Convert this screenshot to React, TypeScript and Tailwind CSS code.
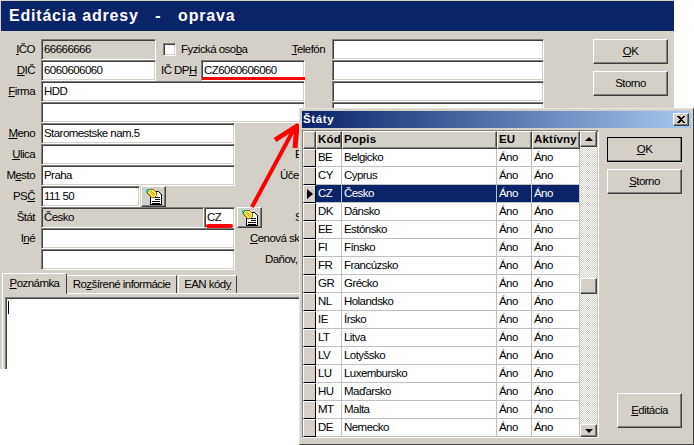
import React from "react";

const raised = "border border-t-white border-l-white border-r-[#404040] border-b-[#404040] shadow-[inset_-1px_-1px_0_#808080] bg-[#d4d0c8]";
const sunken = "border border-t-[#808080] border-l-[#808080] border-r-white border-b-white shadow-[inset_1px_1px_0_#404040,inset_-1px_-1px_0_#d4d0c8]";

function Field({ value = "", className = "", gray = false }: { value?: string; className?: string; gray?: boolean }) {
  return (
    <div className={`h-[21px] shrink-0 flex items-center pl-[2px] overflow-hidden whitespace-nowrap ${sunken} ${gray ? "bg-[#d4d0c8]" : "bg-white"} ${className}`}>
      {value}
    </div>
  );
}

function Label({ children }: { children?: React.ReactNode }) {
  return <div className="w-[35px] mr-[6px] shrink-0 text-right whitespace-nowrap flex justify-end">{children}</div>;
}

function Row({ children }: { children: React.ReactNode }) {
  return <div className="h-[21px] flex items-center whitespace-nowrap">{children}</div>;
}

function LookupIcon() {
  return (
    <svg width="20" height="18" viewBox="0 0 20 18" shapeRendering="crispEdges">
      <path d="M6.500 3.500h8l3 3v10h-11z" fill="#fff" stroke="#000" />
      <path d="M10 9h6M11 11h5M8 13h8M8 15h8" stroke="#000" />
      <path d="M2 1h4v4H2z" fill="#00d8e8" />
      <path d="M5.500 1.500h4l3 3v3l-2 2h-3l-4-4v-2z" fill="#ffec70" stroke="#807000" />
      <path d="M5 3l5 5M7 3l4 4M4 5l3 3" stroke="#c8a000" />
    </svg>
  );
}

function LookupButton() {
  return (
    <div className={`w-[25px] h-[21px] shrink-0 flex items-center justify-center ${raised}`}>
      <LookupIcon />
    </div>
  );
}

function Button({ children, className = "" }: { children: React.ReactNode; className?: string }) {
  return <div className={`flex items-center justify-center shrink-0 ${raised} ${className}`}>{children}</div>;
}

const countries: [string, string][] = [
  ["BE", "Belgicko"], ["CY", "Cyprus"], ["CZ", "Česko"], ["DK", "Dánsko"],
  ["EE", "Estónsko"], ["FI", "Fínsko"], ["FR", "Francúzsko"], ["GR", "Grécko"],
  ["NL", "Holandsko"], ["IE", "Írsko"], ["LT", "Litva"], ["LV", "Lotyšsko"],
  ["LU", "Luxembursko"], ["HU", "Maďarsko"], ["MT", "Malta"], ["DE", "Nemecko"],
];

const dither = "bg-[repeating-conic-gradient(#fff_0_25%,#d4d0c8_0_50%)] bg-[length:2px_2px]";

function HeaderCell({ children, className = "" }: { children?: React.ReactNode; className?: string }) {
  return (
    <div className={`h-[18px] shrink-0 flex items-center pl-[1px] font-bold tracking-[0.2px] whitespace-nowrap overflow-hidden ${raised} ${className}`}>
      {children}
    </div>
  );
}

function CountryRow({ code, name, selected }: { code: string; name: string; selected: boolean }) {
  const cell = "h-[18px] shrink-0 flex items-center pl-[2px] border-r border-b border-[#c0c0c0] whitespace-nowrap";
  return (
    <div className={`flex ${selected ? "bg-[#0a246a] text-white" : "bg-white text-black"}`}>
      <div className="w-[13px] h-[18px] shrink-0 flex items-center justify-center border border-t-white border-l-white border-r-black border-b-black bg-[#d4d0c8]">
        {selected && <div className="w-0 h-0 border-y-[5px] border-y-transparent border-l-[6px] border-l-black" />}
      </div>
      <div className={`w-[26px] ${cell}`}>{code}</div>
      <div className={`w-[155px] ${cell}`}>{name}</div>
      <div className={`w-[35px] ${cell}`}>Áno</div>
      <div className={`w-[48px] ${cell}`}>Áno</div>
    </div>
  );
}

function ScrollButton({ up }: { up: boolean }) {
  return (
    <div className={`w-[17px] flex items-center justify-center shrink-0 ${up ? "h-[16px]" : "h-[13px]"} ${raised}`}>
      <div className={`w-0 h-0 border-x-[4px] border-x-transparent ${up ? "border-b-[4px] border-b-black" : "border-t-[4px] border-t-black"}`} />
    </div>
  );
}

export default function App() {
  return (
    <div className="relative w-[694px] h-[445px] overflow-hidden bg-white text-black text-[11.5px] leading-none tracking-[-0.55px] font-['Liberation_Sans',Arial,sans-serif]">
      {/* Main window */}
      <div className="w-[674px] h-[369px] overflow-hidden bg-[#d4d0c8] pt-[1px] pl-[1px] flex flex-col">
        <div className="h-[30px] shrink-0 bg-[#0a246a] text-white font-bold text-[16px] flex items-center pl-[8px] tracking-[0.8px] [word-spacing:0.3px] whitespace-pre">
          Editácia adresy   -   oprava
        </div>
        <div className="flex pt-[8px] -ml-[1px]">
          <div className="w-[332px] shrink-0 flex flex-col">
            <Row>
              <Label><u>I</u>ČO</Label>
              <Field value="66666666" gray className="w-[115px]" />
              <div className={`ml-[7px] w-[13px] h-[13px] bg-white ${sunken}`} />
              <span className="ml-[5px]">Fyzická oso<u>b</u>a</span>
              <span className="ml-auto mr-[7px]"><u>T</u>elefón</span>
            </Row>
            <Row>
              <Label><u>D</u>IČ</Label>
              <Field value="6060606060" className="w-[115px]" />
              <span className="ml-[5px]">IČ DP<u>H</u></span>
              <Field value="CZ6060606060" className="ml-auto mr-[27px] w-[104px]" />
            </Row>
            <Row>
              <Label><u>F</u>irma</Label>
              <Field value="HDD" className="w-[264px]" />
            </Row>
            <Row>
              <Label />
              <Field className="w-[264px]" />
            </Row>
            <Row>
              <Label><u>M</u>eno</Label>
              <Field value="Staromestske nam.5" className="w-[194px]" />
            </Row>
            <Row>
              <Label><u>U</u>lica</Label>
              <Field className="w-[194px]" />
              <span className="ml-[60px]">E</span>
            </Row>
            <Row>
              <Label>M<u>e</u>sto</Label>
              <Field value="Praha" className="w-[194px]" />
              <span className="ml-[45px]">Úče</span>
            </Row>
            <Row>
              <Label>PS<u>Č</u></Label>
              <Field value="111 50" className="w-[99px]" />
              <div className="ml-[1px]"><LookupButton /></div>
            </Row>
            <Row>
              <Label>Štát</Label>
              <Field value="Česko" gray className="w-[163px]" />
              <Field value="CZ" className="w-[31px]" />
              <div className="ml-[2px]"><LookupButton /></div>
              <span className="ml-[33px]">S</span>
            </Row>
            <Row>
              <Label>I<u>n</u>é</Label>
              <Field className="w-[194px]" />
              <span className="ml-[15px]"><u>C</u>enová sk</span>
            </Row>
            <Row>
              <Label />
              <Field className="w-[194px]" />
              <span className="ml-[30px]">Daňov,</span>
            </Row>
          </div>
          <div className="w-[212px] shrink-0 flex flex-col">
            <Field className="w-full" />
            <Field className="w-full" />
            <Field className="w-full" />
            <Field className="w-full" />
          </div>
          <div className="ml-[49px] w-[75px] shrink-0 flex flex-col gap-[7px]">
            <Button className="w-full h-[25px]"><u>O</u>K</Button>
            <Button className="w-full h-[25px]">Storno</Button>
          </div>
        </div>

        {/* Tabs */}
        <div className="-ml-[1px] mt-[2px] flex items-end h-[21px] pl-[2px] shrink-0 whitespace-nowrap">
          <div className="w-[65px] h-[21px] bg-[#d4d0c8] border-t border-l border-r border-t-white border-l-white border-r-[#404040] flex items-center justify-center -mb-[1px] z-10">
            <span><u>P</u>oznámka</span>
          </div>
          <div className="w-[110px] h-[18px] border-t border-r border-t-white border-r-[#404040] flex items-center justify-center">
            <span>Ro<u>z</u>šírené informácie</span>
          </div>
          <div className="ml-[1px] w-[59px] h-[18px] border-t border-l border-r border-t-white border-l-white border-r-[#404040] flex items-center justify-center">
            <span>EAN kód<u>y</u></span>
          </div>
        </div>
        <div className="ml-[1px] flex-1 border-t border-l border-white pt-[3px] pl-[2px]">
          <div className={`h-[100px] w-[296px] bg-white pt-[3px] pl-[2px] ${sunken}`}>
            <div className="w-[1px] h-[13px] bg-black" />
          </div>
        </div>
      </div>

      {/* Red highlights */}
      <div className="absolute left-[202px] top-[77px] w-[103px] h-[3px] bg-[#ff0000]" />
      <div className="absolute left-[206px] top-[224px] w-[27px] h-[4px] rounded-[2px] bg-[#ff0000]" />
      <svg className="absolute left-0 top-0" width="694" height="445" viewBox="0 0 694 445">
        <path d="M252 207L294 129" stroke="#ff0000" strokeWidth="4" fill="none" />
        <path d="M275 140L297 126L295 148" stroke="#ff0000" strokeWidth="5" strokeLinejoin="round" fill="none" />
      </svg>

      {/* States dialog */}
      <div className="absolute left-[299px] top-[108px] w-[395px] h-[337px] bg-[#d4d0c8] border border-t-[#e8e6e1] border-l-[#e8e6e1] border-r-[#404040] border-b-[#404040] p-[2px] flex flex-col">
        <div className="h-[17px] shrink-0 bg-gradient-to-r from-[#0a246a] to-[#a6caf0] text-white font-bold tracking-[0.6px] flex items-center pl-[1px] pr-[2px] justify-between">
          <span>Štáty</span>
          <div className={`w-[16px] h-[13px] flex items-center justify-center ${raised}`}>
            <svg width="8" height="7" viewBox="0 0 8 7" shapeRendering="crispEdges">
              <path d="M0 0h2l2 2 2-2h2L5 3.500 8 7H6L4 5 2 7H0l3-3.500z" fill="#000" />
            </svg>
          </div>
        </div>
        <div className="flex mt-[2px] flex-1">
          <div className={`w-[297px] h-[308px] shrink-0 flex overflow-hidden ${sunken} bg-[#808080]`}>
            <div className="w-[277px] shrink-0 flex flex-col">
              <div className="flex">
                <HeaderCell className="w-[13px]" />
                <HeaderCell className="w-[26px]">Kód</HeaderCell>
                <HeaderCell className="w-[155px]">Popis</HeaderCell>
                <HeaderCell className="w-[35px]">EU</HeaderCell>
                <HeaderCell className="w-[48px]">Aktívny</HeaderCell>
              </div>
              {countries.map(([c, n]) => (
                <CountryRow key={c} code={c} name={n} selected={c === "CZ"} />
              ))}
            </div>
            <div className={`w-[17px] shrink-0 flex flex-col ${dither}`}>
              <ScrollButton up />
              <div className="h-[131px] shrink-0" />
              <div className={`w-[17px] h-[16px] shrink-0 ${raised}`} />
              <div className="flex-1" />
              <ScrollButton up={false} />
            </div>
          </div>
          <div className="flex-1 flex flex-col items-end pr-[9px] pt-[7px]">
            <Button className="w-[75px] h-[25px] outline outline-1 outline-black -outline-offset-1"><u>O</u>K</Button>
            <Button className="w-[75px] h-[25px] mt-[7px]"><u>S</u>torno</Button>
            <Button className="w-[65px] h-[35px] mt-[199px]"><u>E</u>ditácia</Button>
          </div>
        </div>
      </div>
    </div>
  );
}
